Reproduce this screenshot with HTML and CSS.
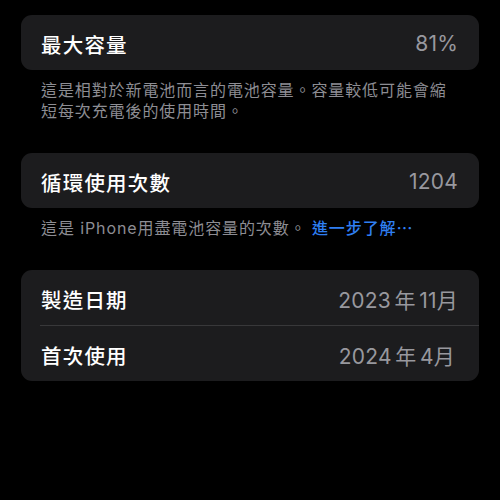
FILE: index.html
```html
<!DOCTYPE html>
<html lang="zh-Hant">
<head>
<meta charset="utf-8">
<link rel="stylesheet" href="styles.css">
</head>
<body>
<main class="page">
  <section class="group">
    <div class="card">
      <div class="row">
        <span class="label">最大容量</span>
        <span class="value">81%</span>
      </div>
    </div>
    <p class="note">這是相對於新電池而言的電池容量。容量較低可能會縮短每次充電後的使用時間。</p>
  </section>
  <section class="group">
    <div class="card">
      <div class="row">
        <span class="label">循環使用次數</span>
        <span class="value">1204</span>
      </div>
    </div>
    <p class="note">這是 iPhone用盡電池容量的次數。 <span class="link">進一步了解⋯</span></p>
  </section>
  <section class="group">
    <div class="card">
      <div class="row">
        <span class="label">製造日期</span>
        <span class="value">2023<span class="thin"> </span>年<span class="thin"> </span>11月</span>
      </div>
      <div class="row sep">
        <span class="label">首次使用</span>
        <span class="value">2024<span class="thin"> </span>年<span class="thin"> </span>4月</span>
      </div>
    </div>
  </section>
</main>
</body>
</html>
```

FILE: styles.css
```css
html, body {
  margin: 0;
  padding: 0;
  background: #000;
}
body {
  width: 500px;
  height: 500px;
  overflow: hidden;
  font-family: "Inter", "Noto Sans CJK TC", "Noto Sans", sans-serif;
  color: #fff;
}
.page {
  padding: 15px 21px 0 21px;
  display: flex;
  flex-direction: column;
}
.group {
  margin-bottom: 31px;
}
.card {
  background: #1c1c1e;
  border-radius: 11px;
  overflow: hidden;
}
.row {
  height: 55px;
  padding: 2px 21px 0 20px;
  box-sizing: border-box;
  display: flex;
  align-items: center;
  justify-content: space-between;
}
.row.sep {
  height: 56px;
  margin-left: 19px;
  padding-left: 1px;
  padding-right: 24px;
  border-top: 1px solid #38383a;
}
.label {
  font-size: 20.5px;
  letter-spacing: 1.2px;
  font-weight: 500;
  color: #fff;
}
.value {
  font-size: 21px;
  color: #98989e;
  letter-spacing: 0.2px;
}
.thin {
  font-size: 12px;
}
.note {
  margin: 10px 0 0 0;
  padding: 0 25px 0 20px;
  font-size: 16px;
  line-height: 21px;
  letter-spacing: 0.9px;
  color: #8d8d93;
}
.link {
  color: #2f7ff2;
  font-weight: 500;
}
```
